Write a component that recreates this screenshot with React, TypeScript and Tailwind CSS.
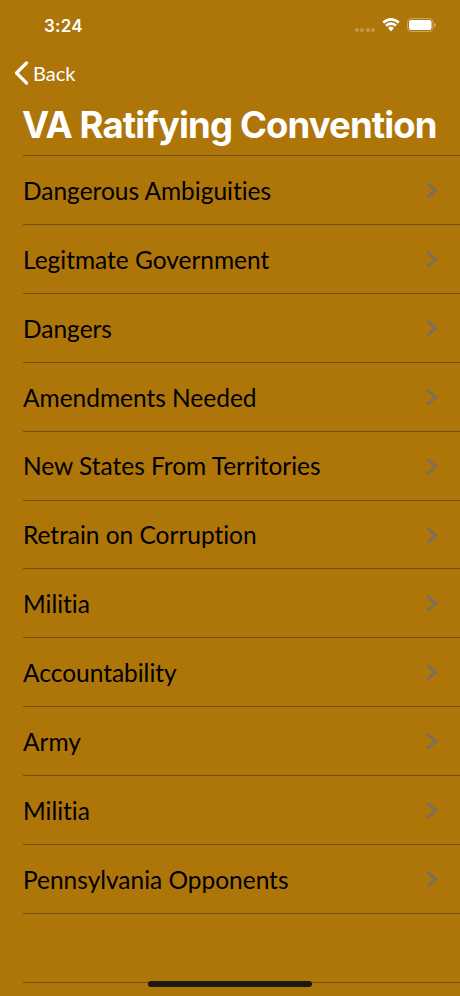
import React from 'react';

const topics = [
  'Dangerous Ambiguities',
  'Legitmate Government',
  'Dangers',
  'Amendments Needed',
  'New States From Territories',
  'Retrain on Corruption',
  'Militia',
  'Accountability',
  'Army',
  'Militia',
  'Pennsylvania Opponents',
];

function StatusBar() {
  return (
    <div className="flex h-[50px] items-center justify-between pl-[44px] pr-[23px] font-['Inter',sans-serif] text-white">
      <span className="pt-[2px] text-[17px] font-semibold leading-none tracking-[0.2px]">3:24</span>
      <div className="flex items-center">
        <div className="mr-[7px] flex gap-[1.500px] pt-[9px]">
          {[0, 1, 2, 3].map((i) => (
            <span key={i} className="size-[4px] rounded-full bg-white/25" />
          ))}
        </div>
        <svg className="mr-[7px]" width="18" height="14" viewBox="0 0 18 13" preserveAspectRatio="none" fill="white">
          <path d="M9 2.600c2.500 0 4.800 1 6.500 2.500.1.1.3.1.5 0l1.400-1.300c.1-.2.1-.4 0-.5a12.400 12.400 0 0 0-16.800 0c-.1.1-.1.3 0 .5L2 5.100c.2.1.4.1.5 0A9.600 9.600 0 0 1 9 2.600z" />
          <path d="M9 6.500c1.400 0 2.700.5 3.700 1.400.1.1.3.1.5 0l1.400-1.400c.2-.2.2-.4 0-.5a8.400 8.400 0 0 0-11.200 0c-.2.1-.2.3 0 .5l1.400 1.400c.2.1.4.1.5 0A5.600 5.600 0 0 1 9 6.500z" />
          <path d="M11.800 9.600c.1-.1.1-.3 0-.4a4.200 4.200 0 0 0-5.600 0c-.1.1-.1.3 0 .4L8.800 12.200c.1.1.3.1.4 0z" />
        </svg>
        <svg width="30" height="14" viewBox="0 0 30 14">
          <rect x="0.500" y="0.500" width="25.500" height="13" rx="3.800" fill="none" stroke="white" strokeOpacity="0.350" />
          <rect x="2" y="2" width="22.500" height="10" rx="2.200" fill="white" />
          <path d="M27.300 4.700v4.600c1-.4 1.500-1.300 1.500-2.300s-.5-1.900-1.500-2.300z" fill="white" fillOpacity="0.450" />
        </svg>
      </div>
    </div>
  );
}

function TopicRow({ title }: { title: string }) {
  return (
    <li className="ml-[23px] flex h-[68.880px] items-center justify-between border-b border-[#72500f] pr-[22px]">
      <span className="whitespace-nowrap pt-[2px] text-[24.500px] leading-none tracking-[-0.020px] text-black [font-variant-ligatures:none]">
        {title}
      </span>
      <svg width="12" height="18" viewBox="0 0 12 18" fill="none">
        <path d="M1.500 2.300 9.700 9.300l-8.200 7" stroke="#7c6f5a" strokeWidth="3" />
      </svg>
    </li>
  );
}

export default function App() {
  return (
    <div className="relative flex h-[996px] w-[460px] flex-col overflow-hidden bg-[#ae7509] font-['Lato',sans-serif]">
      <StatusBar />
      <div className="flex h-[46px] items-center gap-[4px] pl-[14px] text-white">
        <svg width="15" height="24" viewBox="0 0 15 24" fill="none">
          <path d="M12.500 2 2.500 12l10 10" stroke="white" strokeWidth="3.200" strokeLinecap="round" strokeLinejoin="round" />
        </svg>
        <span className="-mt-px text-[20px] leading-none">Back</span>
      </div>
      <div className="ml-[23px] flex h-[60.200px] items-center border-b border-[#72500f]">
        <h1 className="-ml-px whitespace-nowrap font-['Inter',sans-serif] text-[36.500px] font-bold leading-none tracking-[-0.880px] text-white">
          VA Ratifying Convention
        </h1>
      </div>
      <ul>
        {topics.map((title, i) => (
          <TopicRow key={i} title={title} />
        ))}
        <li className="ml-[23px] h-[68.880px] border-b border-[#72500f]" />
      </ul>
      <div className="absolute bottom-[9px] left-[148px] h-[6px] w-[164px] rounded-full bg-[#1b1811]" />
    </div>
  );
}
